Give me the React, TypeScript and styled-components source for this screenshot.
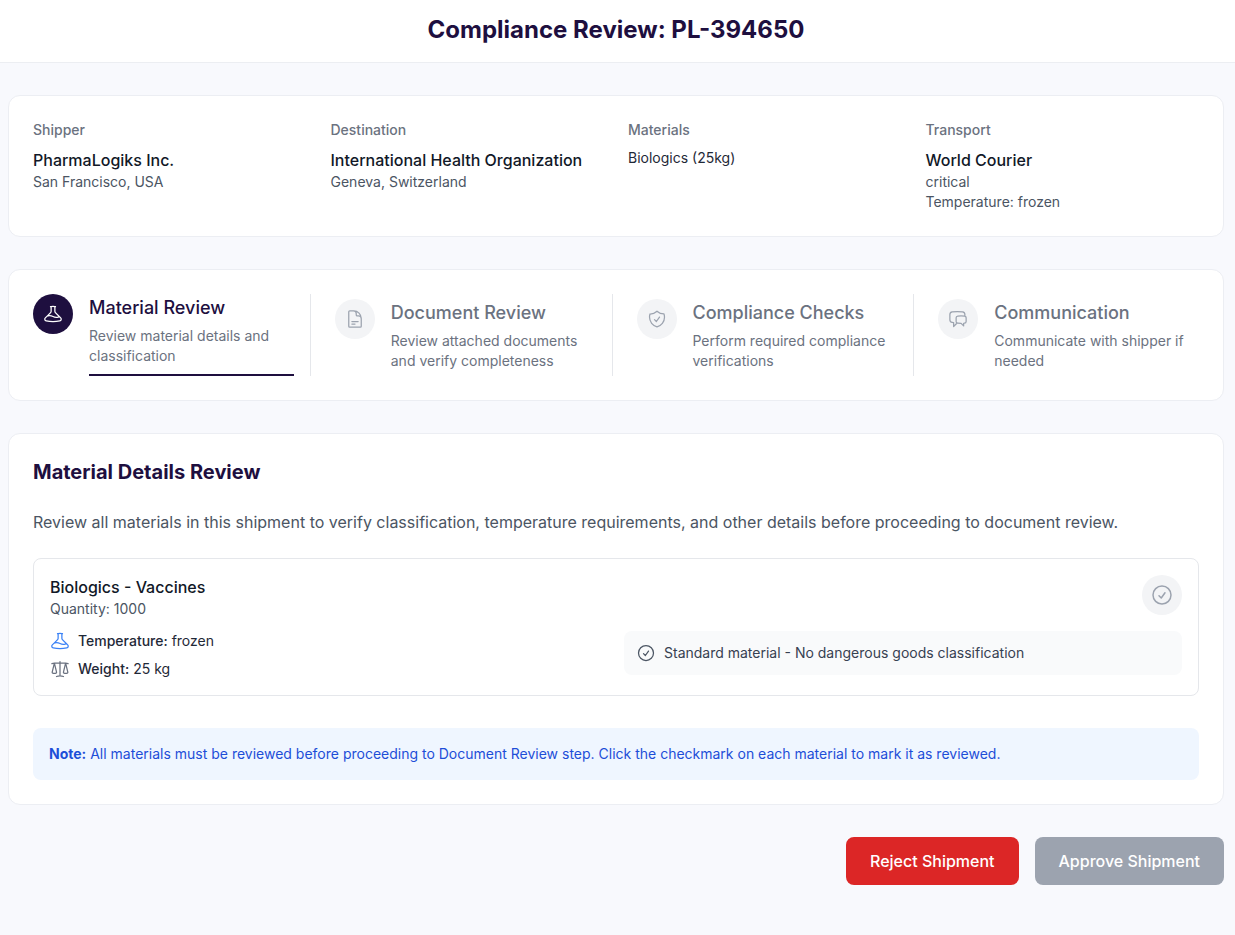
import React from "react";
import styled, { createGlobalStyle, css } from "styled-components";
import {
  HiOutlineBeaker,
  HiOutlineDocumentText,
  HiOutlineShieldCheck,
  HiOutlineChatBubbleLeftRight,
  HiOutlineScale,
  HiOutlineCheckCircle,
} from "react-icons/hi2";

const GlobalStyle = createGlobalStyle`
  *, *::before, *::after { box-sizing: border-box; }
  body {
    margin: 0;
    background: #f8f9fd;
    font-family: Inter, "Liberation Sans", sans-serif;
    color: #1f2937;
  }
  h1, h2, h3, p { margin: 0; }
  svg { display: block; flex-shrink: 0; }
`;

const Page = styled.div`
  min-height: 935px;
`;

const Header = styled.header`
  height: 63px;
  padding: 14px 3px 0 0;
  background: #fff;
  border-bottom: 1px solid #eceef2;
  text-align: center;
`;

const PageTitle = styled.h1`
  font-size: 24px;
  line-height: 32px;
  font-weight: 700;
  color: #1e0f3f;
`;

const Content = styled.main`
  width: 1232px;
  padding: 32px 8px 50px;
  display: flex;
  flex-direction: column;
  gap: 32px;
`;

const Card = styled.section`
  padding: 24px;
  background: #fff;
  border: 1px solid #eceef3;
  border-radius: 12px;
`;

const SummaryGrid = styled(Card)`
  display: grid;
  grid-template-columns: repeat(4, 1fr);
  gap: 24px;
`;

const Small = styled.p`
  font-size: 14px;
  line-height: 20px;
  color: #4b5563;
`;

const SummaryLabel = styled(Small)`
  margin-bottom: 8px;
  font-weight: 500;
  color: #6b7280;
`;

const Strong = styled.p`
  font-size: 16px;
  line-height: 24px;
  font-weight: 500;
  color: #111827;
`;

const MaterialLine = styled(Small)`
  color: #1f2937;
`;

const Steps = styled(Card)`
  display: flex;
  gap: 24px;
`;

const StepItem = styled.div`
  flex: 1 1 0;
  min-width: 0;
  display: flex;
  align-items: center;

  &:not(:last-child) {
    padding-right: 16px;
    border-right: 1px solid #e5e7eb;
  }
`;

const StepButton = styled.div`
  width: 100%;
  display: flex;
  align-items: flex-start;
  gap: 16px;
`;

const IconCircle = styled.div<{ $active?: boolean }>`
  width: 40px;
  height: 40px;
  flex-shrink: 0;
  display: flex;
  align-items: center;
  justify-content: center;
  border-radius: 50%;
  background: ${(p) => (p.$active ? "#1e0f3f" : "#f3f4f6")};
  color: ${(p) => (p.$active ? "#fff" : "#9ca3af")};
`;

const StepText = styled.div<{ $active?: boolean }>`
  flex: 1;
  min-width: 0;
  ${(p) =>
    p.$active &&
    css`
      padding-bottom: 8px;
      border-bottom: 2px solid #1e0f3f;
    `}
`;

const StepTitle = styled.h3<{ $active?: boolean }>`
  margin-bottom: 4px;
  font-size: 18px;
  line-height: 28px;
  font-weight: 500;
  color: ${(p) => (p.$active ? "#1e0f3f" : "#6b7280")};
`;

const StepDescription = styled(Small)`
  color: #6b7280;
`;

const SectionTitle = styled.h2`
  margin-bottom: 24px;
  font-size: 20px;
  line-height: 28px;
  font-weight: 700;
  color: #1e0f3f;
`;

const Intro = styled.p`
  margin-bottom: 24px;
  font-size: 16px;
  line-height: 24px;
  color: #4b5563;
`;

const Material = styled.article`
  padding: 16px;
  border: 1px solid #e5e7eb;
  border-radius: 8px;
`;

const MaterialHeader = styled.div`
  height: 44px;
  margin-bottom: 12px;
  display: flex;
  justify-content: space-between;
  align-items: flex-start;
`;

const MaterialBody = styled.div`
  display: grid;
  grid-template-columns: 1fr 1fr;
  gap: 16px;
  align-items: start;
`;

const Attributes = styled.div`
  display: flex;
  flex-direction: column;
  gap: 8px;
`;

const Attribute = styled.div<{ $tint: string }>`
  display: flex;
  align-items: center;
  gap: 8px;
  font-size: 14px;
  line-height: 20px;
  color: #1f2937;

  svg { color: ${(p) => p.$tint}; }
  b { font-weight: 500; }
`;

const Classification = styled.div`
  padding: 12px;
  display: flex;
  align-items: center;
  gap: 8px;
  border-radius: 8px;
  background: #f9fafb;
  font-size: 14px;
  line-height: 20px;
  color: #374151;

  svg { color: #4b5563; }
`;

const Note = styled.p`
  margin-top: 32px;
  padding: 16px;
  border-radius: 8px;
  background: #eff6ff;
  font-size: 14px;
  line-height: 20px;
  color: #1d4ed8;

  b { font-weight: 700; }
`;

const Actions = styled.div`
  display: flex;
  justify-content: flex-end;
  gap: 16px;
`;

const Button = styled.button<{ $background: string }>`
  padding: 12px 24px;
  border: 0;
  border-radius: 8px;
  background: ${(p) => p.$background};
  font-family: inherit;
  font-size: 16px;
  line-height: 24px;
  font-weight: 500;
  color: #fff;
`;

const summary = [
  { label: "Shipper", name: "PharmaLogiks Inc.", lines: ["San Francisco, USA"] },
  { label: "Destination", name: "International Health Organization", lines: ["Geneva, Switzerland"] },
  { label: "Materials", lines: ["Biologics (25kg)"] },
  { label: "Transport", name: "World Courier", lines: ["critical", "Temperature: frozen"] },
];

const steps = [
  { title: "Material Review", text: "Review material details and classification", Icon: HiOutlineBeaker, active: true },
  { title: "Document Review", text: "Review attached documents and verify completeness", Icon: HiOutlineDocumentText },
  { title: "Compliance Checks", text: "Perform required compliance verifications", Icon: HiOutlineShieldCheck },
  { title: "Communication", text: "Communicate with shipper if needed", Icon: HiOutlineChatBubbleLeftRight },
];

export default function App() {
  return (
    <Page>
      <GlobalStyle />
      <Header>
        <PageTitle>Compliance Review: PL-394650</PageTitle>
      </Header>
      <Content>
        <SummaryGrid>
          {summary.map(({ label, name, lines }) => {
            const Line = name ? Small : MaterialLine;
            return (
              <div key={label}>
                <SummaryLabel>{label}</SummaryLabel>
                {name && <Strong>{name}</Strong>}
                {lines.map((line) => (
                  <Line key={line}>{line}</Line>
                ))}
              </div>
            );
          })}
        </SummaryGrid>

        <Steps>
          {steps.map(({ title, text, Icon, active }) => (
            <StepItem key={title}>
              <StepButton>
                <IconCircle $active={active}>
                  <Icon size={20} />
                </IconCircle>
                <StepText $active={active}>
                  <StepTitle $active={active}>{title}</StepTitle>
                  <StepDescription>{text}</StepDescription>
                </StepText>
              </StepButton>
            </StepItem>
          ))}
        </Steps>

        <Card>
          <SectionTitle>Material Details Review</SectionTitle>
          <Intro>
            Review all materials in this shipment to verify classification, temperature requirements, and other
            details before proceeding to document review.
          </Intro>
          <Material>
            <MaterialHeader>
              <div>
                <Strong>Biologics - Vaccines</Strong>
                <Small>Quantity: 1000</Small>
              </div>
              <IconCircle>
                <HiOutlineCheckCircle size={24} />
              </IconCircle>
            </MaterialHeader>
            <MaterialBody>
              <Attributes>
                <Attribute $tint="#3b82f6">
                  <HiOutlineBeaker size={20} />
                  <span><b>Temperature:</b> frozen</span>
                </Attribute>
                <Attribute $tint="#6b7280">
                  <HiOutlineScale size={20} />
                  <span><b>Weight:</b> 25 kg</span>
                </Attribute>
              </Attributes>
              <Classification>
                <HiOutlineCheckCircle size={20} />
                <span>Standard material - No dangerous goods classification</span>
              </Classification>
            </MaterialBody>
          </Material>
          <Note>
            <b>Note:</b> All materials must be reviewed before proceeding to Document Review step. Click the
            checkmark on each material to mark it as reviewed.
          </Note>
        </Card>

        <Actions>
          <Button $background="#dc2626">Reject Shipment</Button>
          <Button $background="#9ca3af">Approve Shipment</Button>
        </Actions>
      </Content>
    </Page>
  );
}
